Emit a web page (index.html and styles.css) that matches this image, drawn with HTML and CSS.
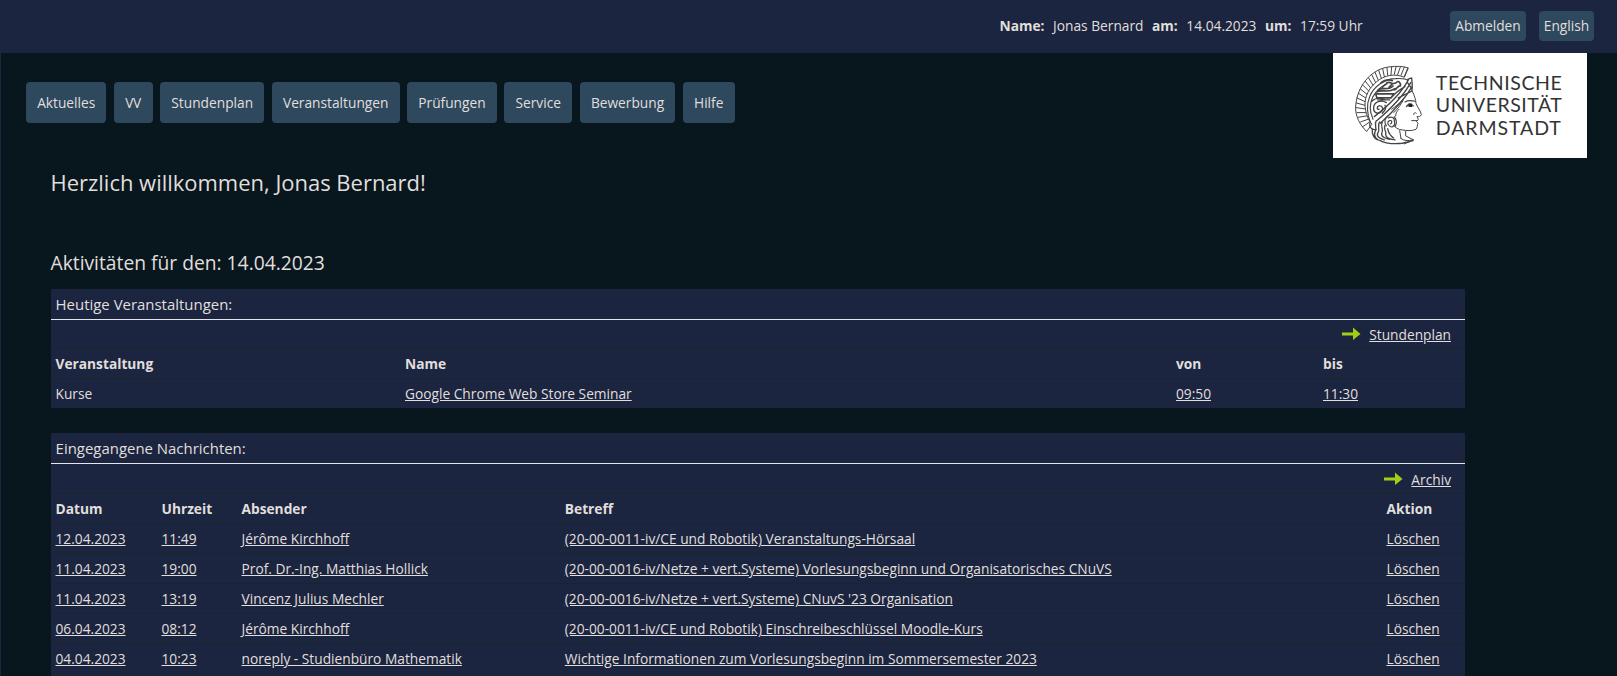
FILE: index.html
```html
<!DOCTYPE html>
<html lang="de">
<head>
<meta charset="utf-8">
<title>Aktuelles</title>
<link rel="stylesheet" href="styles.css">
</head>
<body>
<header class="topbar">
  <dl class="login">
    <dt>Name:</dt><dd>Jonas Bernard</dd>
    <dt>am:</dt><dd>14.04.2023</dd>
    <dt>um:</dt><dd>17:59 Uhr</dd>
  </dl>
  <div class="actions"><a class="abmelden">Abmelden</a><a class="english">English</a></div>
</header>
<div class="page">
  <div class="masthead">
    <nav class="nav">
      <a>Aktuelles</a><a class="vv">VV</a><a>Stundenplan</a><a>Veranstaltungen</a><a>Prüfungen</a><a>Service</a><a>Bewerbung</a><a>Hilfe</a>
    </nav>
    <div class="logo">
      <svg width="254" height="105" viewBox="0 0 254 105" role="img" aria-label="Technische Universität Darmstadt">
        <g transform="translate(12 3.6) scale(.33333)" fill="none" stroke="#444" stroke-linecap="round" stroke-linejoin="round">
          <path d="M64 224C36 196 27 164 34 134C42 82 82 37 132 31C154 28 176 29 190 34L178 62C150 50 118 55 94 76C66 100 55 130 62 162C65 178 70 190 80 202Z" stroke-width="3"/>
          <path d="M178 60L188 35M168 56L178 32M158 54L166 31M148 53L153 31M138 54L140 31M128 56L126 33M118 60L113 36M109 65L101 41M100 71L90 47M92 78L80 54M84 86L70 63M77 94L61 74M71 103L53 85M66 113L46 97M62 124L40 110M60 135L36 124M59 146L34 139M60 157L33 153M62 168L36 168M65 178L40 182M69 188L47 196M74 196L54 210" stroke-width="3"/>
          <path d="M76 196C66 174 64 144 74 120C86 90 120 66 152 66C172 65 184 66 188 72M84 188C74 166 74 140 84 120C94 102 106 90 126 82M76 196C70 210 80 222 94 218" stroke-width="3.5"/>
          <path d="M188 68L200 64C201 78 204 92 200 104L160 124M190 70C172 104 132 146 88 180M197 78C178 114 142 152 96 192M201 90C184 120 152 158 106 200M186 76L200 96M180 90C166 98 152 108 144 118" stroke-width="4"/>
          <path d="M92 112H146L138 124H96ZM100 100C112 90 130 104 144 88M96 106C110 96 128 112 150 96M124 80C136 70 140 88 154 78C160 70 168 78 166 88C158 86 156 98 148 100M112 92L120 84M132 92L142 82M108 78C118 70 130 68 142 72" stroke-width="5"/>
          <path d="M124 138C108 128 88 136 86 152C84 168 98 174 108 166C118 158 112 146 102 148C94 150 96 160 102 158M120 146C124 152 120 162 112 170M80 134C90 124 106 122 120 130M98 130L134 130" stroke-width="4"/>
          <path d="M130 184C138 178 150 184 148 194C152 204 144 214 136 210C126 204 126 194 134 192C142 190 142 200 136 202M128 178C120 184 116 196 124 208M148 180C154 188 156 200 150 210" stroke-width="3.5"/>
          <path d="M94 192C86 204 98 214 90 226C84 240 96 250 110 254C128 262 150 262 172 260L204 252M104 196C94 208 108 218 98 230C94 240 104 246 118 250M112 196C104 210 118 216 110 230C108 240 120 246 134 248M120 206C114 220 126 224 122 234C122 242 134 248 150 250M82 218C80 234 88 246 98 250M128 216C130 228 134 236 146 244" stroke-width="4"/>
          <path d="M202 104C208 116 212 128 213 140C216 150 228 164 229 174C228 180 221 180 216 180L220 188L214 194L219 200C216 206 218 214 213 218C200 224 184 222 172 220C160 220 150 212 146 206M200 192H218M206 174C206 168 212 166 214 170M164 222L168 246M182 224L182 238L206 250L178 262M168 246C176 252 188 254 204 250" stroke-width="3"/>
          <path d="M180 136C190 130 202 132 210 134M184 150C190 140 198 140 205 148M186 148H204" stroke-width="3.5"/>
          <path d="M190 141h11v10h-9z" fill="#222" stroke="none"/>
          <path d="M140 158C152 150 166 138 178 124M146 168C158 158 168 144 174 132M152 178C152 168 156 164 162 158" stroke-width="3"/>
        </g>
        <g class="logo-text">
          <text x="102.8" y="37.2" textLength="126">TECHNISCHE</text>
          <text x="102.8" y="59.4" textLength="126">UNIVERSITÄT</text>
          <text x="102.8" y="82" textLength="125">DARMSTADT</text>
        </g>
      </svg>
    </div>
  </div>
  <main class="content">
    <h1>Herzlich willkommen, Jonas Bernard!</h1>
    <h2>Aktivitäten für den: 14.04.2023</h2>
    <section class="box courses">
      <div class="caption">Heutige Veranstaltungen:</div>
      <div class="more"><svg class="arrow" width="19" height="14" viewBox="0 0 19 14"><path d="M0 5.6H11V0.5L18.5 7L11 13V8.4H0Z"/></svg><a>Stundenplan</a></div>
      <div class="row head"><span>Veranstaltung</span><span>Name</span><span>von</span><span>bis</span></div>
      <div class="row"><span>Kurse</span><a>Google Chrome Web Store Seminar</a><a>09:50</a><a>11:30</a></div>
    </section>
    <section class="box messages">
      <div class="caption">Eingegangene Nachrichten:</div>
      <div class="more"><svg class="arrow" width="19" height="14" viewBox="0 0 19 14"><path d="M0 5.6H11V0.5L18.5 7L11 13V8.4H0Z"/></svg><a>Archiv</a></div>
      <div class="row head"><span>Datum</span><span>Uhrzeit</span><span>Absender</span><span>Betreff</span><span>Aktion</span></div>
      <div class="row"><a>12.04.2023</a><a>11:49</a><a>Jérôme Kirchhoff</a><a>(20-00-0011-iv/CE und Robotik) Veranstaltungs-Hörsaal</a><a>Löschen</a></div>
      <div class="row"><a>11.04.2023</a><a>19:00</a><a>Prof. Dr.-Ing. Matthias Hollick</a><a>(20-00-0016-iv/Netze + vert.Systeme) Vorlesungsbeginn und Organisatorisches CNuVS</a><a>Löschen</a></div>
      <div class="row"><a>11.04.2023</a><a>13:19</a><a>Vincenz Julius Mechler</a><a>(20-00-0016-iv/Netze + vert.Systeme) CNuvS '23 Organisation</a><a>Löschen</a></div>
      <div class="row"><a>06.04.2023</a><a>08:12</a><a>Jérôme Kirchhoff</a><a>(20-00-0011-iv/CE und Robotik) Einschreibeschlüssel Moodle-Kurs</a><a>Löschen</a></div>
      <div class="row"><a>04.04.2023</a><a>10:23</a><a>noreply - Studienbüro Mathematik</a><a>Wichtige Informationen zum Vorlesungsbeginn im Sommersemester 2023</a><a>Löschen</a></div>
      <div class="row"></div>
    </section>
  </main>
</div>
</body>
</html>
```
FILE: styles.css
```css
* { box-sizing: border-box; }
body {
  margin: 0;
  height: 676px;
  overflow: hidden;
  background: #08161e;
  color: #e0dfdc;
  font: 13.74px/20px "Open Sans", "Noto Sans", sans-serif;
}
.topbar {
  display: flex;
  justify-content: flex-end;
  height: 53px;
  padding: 11px 23px 0 0;
  background: #1b2540;
}
.login { display: flex; margin: 0; padding-top: 5px; width: 450.5px; }
.login dt { font-weight: 700; margin-right: 8.6px; }
.login dd { margin: 0 8.6px 0 0; }
.actions { display: flex; gap: 13px; }
.actions a {
  height: 30px;
  padding: 5px 0;
  border-radius: 4px;
  background: #2e485e;
  text-align: center;
}
.abmelden { width: 76px; }
.english { width: 55px; }
.page { border-left: 1px solid #1b2540; }
.masthead { display: flex; justify-content: space-between; padding: 0 30px 0 25px; height: 105px; }
.nav { display: flex; gap: 7.6px; padding-top: 29px; }
.nav a {
  height: 41px;
  padding: 11px 11.15px 0;
  border-radius: 4px;
  background: #2e485e;
}
.nav .vv { width: 38.6px; letter-spacing: -0.4px; }
.logo { width: 254px; height: 105px; background: #fff; }
.logo svg { display: block; }
.logo-text { font: 19.5px Lato, "Open Sans", sans-serif; fill: #333; }
.content { padding-left: 50px; width: 1464px; }
h1, h2 { margin: 0 0 0 -0.5px; font-weight: 400; }
h1 { padding-top: 9px; font-size: 21.97px; line-height: 32px; }
h2 { padding-top: 49px; font-size: 19.25px; line-height: 30px; }
.box { background: #1b2540; }
.courses { margin: 11px 0 25px; }
.caption {
  height: 31px;
  padding: 5px 4.6px 0;
  border-bottom: 1px solid #e4e6ea;
  font-size: 14.95px;
}
.more { display: flex; justify-content: flex-end; gap: 8px; height: 28px; padding: 5px 14px 0 0; }
.messages .more { height: 29px; padding-top: 6px; }
.arrow { margin-top: 2px; fill: #a3cf12; }
.more a, .row a { text-decoration: underline; justify-self: start; }
.row { display: grid; height: 30px; padding: 5px 4.5px 0; border-top: 1px solid #18242e; }
.courses .row { grid-template-columns: 349.5px 771px 147px 1fr; }
.messages .row { grid-template-columns: 106px 80px 323.3px 821.7px 1fr; }
.head { font-weight: 700; }
```
